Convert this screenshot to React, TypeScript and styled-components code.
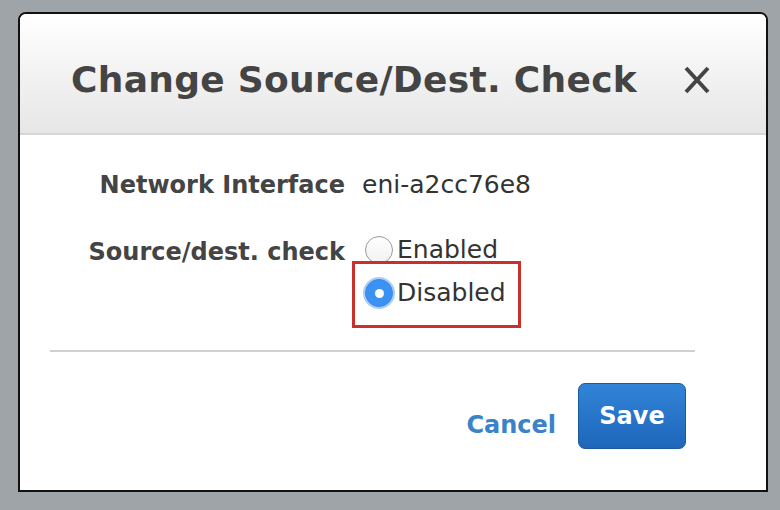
import React from "react";
import styled, { createGlobalStyle } from "styled-components";

const Global = createGlobalStyle`
  html, body { margin: 0; padding: 0; }
  body {
    background: #9fa4a9;
    font-family: "DejaVu Sans", "Liberation Sans", Arial, sans-serif;
    width: 780px;
    height: 510px;
    overflow: hidden;
  }
`;

const Page = styled.div`
  padding: 12px 0 0 18px;
`;

const Dialog = styled.div`
  width: 750px;
  height: 480px;
  box-sizing: border-box;
  border: 2px solid #111;
  border-radius: 8px 8px 0 0;
  background: #fff;
  overflow: hidden;
  display: flex;
  flex-direction: column;
`;

const Header = styled.div`
  height: 121px;
  box-sizing: border-box;
  display: flex;
  align-items: center;
  justify-content: space-between;
  padding: 12px 54px 0 51px;
  background: linear-gradient(#ffffff, #e6e6e6);
  border-bottom: 2px solid #d6d6d6;
`;

const Title = styled.h1`
  margin: 0;
  font-size: 36px;
  font-weight: bold;
  color: #444;
  letter-spacing: 0.3px;
`;

const Close = styled.button`
  border: none;
  background: none;
  padding: 0;
  width: 30px;
  height: 30px;
  display: flex;
  align-items: center;
  justify-content: center;
  cursor: pointer;
`;

const Body = styled.div`
  padding: 34px 0 0 0;
`;

const Form = styled.div`
  display: grid;
  grid-template-columns: 325px 1fr;
  column-gap: 17px;
  row-gap: 35px;
  align-items: start;
`;

const Label = styled.div`
  font-size: 24px;
  font-weight: bold;
  color: #444;
  text-align: right;
  line-height: 32px;
`;

const Value = styled.div`
  font-size: 25px;
  color: #333;
  line-height: 32px;
`;

const RadioGroup = styled.div`
  display: flex;
  flex-direction: column;
  gap: 11px;
  margin-left: 3px;
  margin-top: -2px;
`;

const Option = styled.label`
  position: relative;
  display: inline-flex;
  align-items: center;
  align-self: flex-start;
  font-size: 25px;
  color: #333;
  line-height: 32px;
`;

const Radio = styled.span<{ $checked?: boolean }>`
  width: 28px;
  height: 28px;
  box-sizing: border-box;
  border-radius: 50%;
  margin-right: 4px;
  display: inline-flex;
  align-items: center;
  justify-content: center;
  ${(p) =>
    p.$checked
      ? `background: #3b92f2; border: 1px solid #3a8ae6; box-shadow: 0 0 0 2px #a9cdf8;`
      : `background: linear-gradient(#ffffff, #f1f1f1); border: 1px solid #9a9a9a;`}
  &::after {
    content: "";
    display: ${(p) => (p.$checked ? "block" : "none")};
    width: 9px;
    height: 9px;
    border-radius: 50%;
    background: #fff;
  }
`;

const Highlight = styled.span`
  position: absolute;
  left: -13px;
  right: -15px;
  top: -16px;
  bottom: -19px;
  border: 3px solid #c9302c;
  pointer-events: none;
`;

const Rule = styled.hr`
  margin: 41px 71px 0 30px;
  border: none;
  border-top: 2px solid #d0d0d0;
`;

const Footer = styled.div`
  display: flex;
  justify-content: flex-end;
  align-items: center;
  gap: 22px;
  padding: 31px 80px 0 0;
`;

const Cancel = styled.button`
  border: none;
  background: none;
  padding: 0;
  margin-top: 18px;
  font-family: inherit;
  font-size: 24px;
  font-weight: bold;
  color: #3b82c8;
  cursor: pointer;
`;

const Save = styled.button`
  width: 108px;
  height: 66px;
  border: 1px solid #1c5a9e;
  border-radius: 7px;
  background: linear-gradient(#3184d8, #1e66ba);
  color: #fff;
  font-family: inherit;
  font-size: 24px;
  font-weight: bold;
  padding: 0;
  cursor: pointer;
`;

export default function App() {
  return (
    <>
      <Global />
      <Page>
        <Dialog>
          <Header>
            <Title>Change Source/Dest. Check</Title>
            <Close aria-label="Close">
              <svg width="30" height="28" viewBox="0 0 30 28">
                <path d="M4 2 L26 26 M26 2 L4 26" stroke="#444" strokeWidth="4" />
              </svg>
            </Close>
          </Header>
          <Body>
            <Form>
              <Label>Network Interface</Label>
              <Value>eni-a2cc76e8</Value>
              <Label>Source/dest. check</Label>
              <RadioGroup>
                <Option>
                  <Radio />
                  Enabled
                </Option>
                <Option>
                  <Radio $checked />
                  Disabled
                  <Highlight />
                </Option>
              </RadioGroup>
            </Form>
            <Rule />
            <Footer>
              <Cancel>Cancel</Cancel>
              <Save>Save</Save>
            </Footer>
          </Body>
        </Dialog>
      </Page>
    </>
  );
}
